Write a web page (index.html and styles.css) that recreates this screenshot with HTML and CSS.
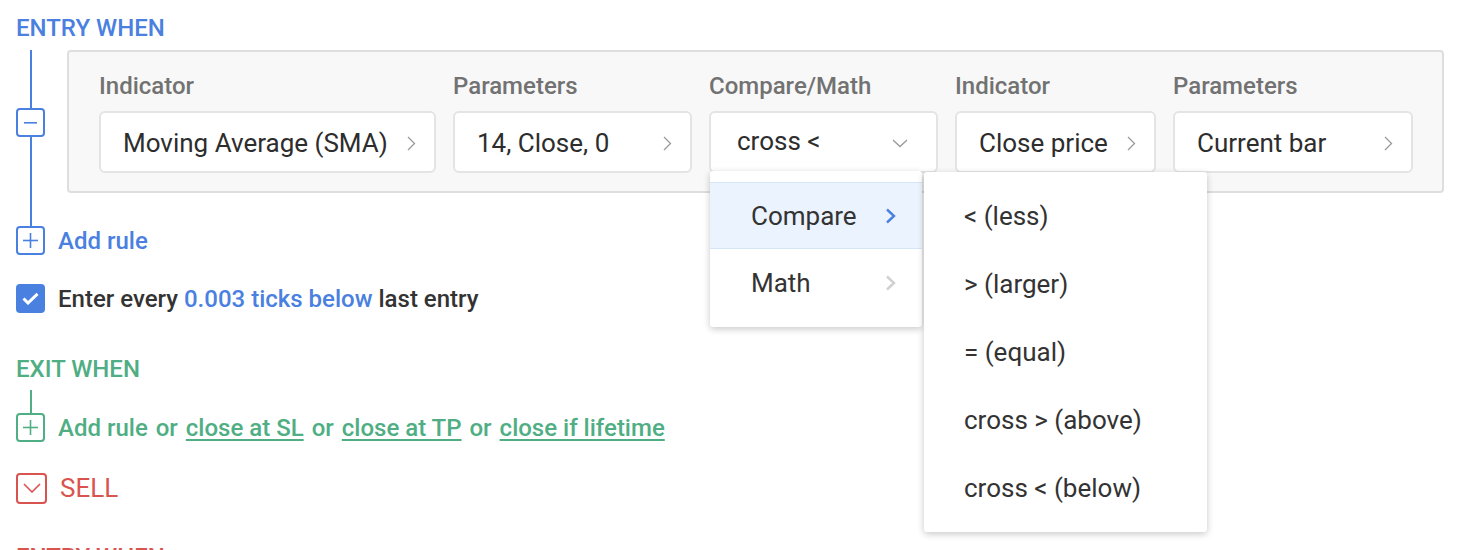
FILE: index.html
```html
<!DOCTYPE html>
<html>
<head>
<meta charset="utf-8">
<link rel="stylesheet" href="styles.css">
</head>
<body>
<div class="page">
  <div class="section-title blue">ENTRY WHEN</div>

  <div class="rule-row">
    <div class="gutter">
      <span class="vline vline-top blue-line"></span>
      <span class="tree-btn btn-blue">
        <svg width="13" height="2" viewBox="0 0 13 2"><rect x="0" y="0" width="13" height="1.6" fill="#4a80e0"/></svg>
      </span>
      <span class="vline vline-grow blue-line"></span>
    </div>
    <div class="panel">
      <div class="field f1">
        <div class="label">Indicator</div>
        <div class="box"><span>Moving Average (SMA)</span><svg class="chev" width="9" height="15" viewBox="0 0 9 15"><path d="M1 1 L7.5 7.5 L1 14" fill="none" stroke="#9a9a9a" stroke-width="1.3"/></svg></div>
      </div>
      <div class="field f2">
        <div class="label">Parameters</div>
        <div class="box"><span>14, Close, 0</span><svg class="chev" width="9" height="15" viewBox="0 0 9 15"><path d="M1 1 L7.5 7.5 L1 14" fill="none" stroke="#9a9a9a" stroke-width="1.3"/></svg></div>
      </div>
      <div class="field f3">
        <div class="label">Compare/Math</div>
        <div class="box box-select"><span>cross &lt;</span><svg class="chev-down" width="16" height="9" viewBox="0 0 16 9"><path d="M1 1 L8 7.5 L15 1" fill="none" stroke="#9a9a9a" stroke-width="1.3"/></svg></div>
        <div class="menus">
          <div class="menu menu-main">
            <div class="menu-item active"><span>Compare</span><svg width="12" height="16" viewBox="0 0 12 16"><path d="M2 1.5 L9 8 L2 14.5" fill="none" stroke="#4a80e0" stroke-width="2.4"/></svg></div>
            <div class="menu-item"><span>Math</span><svg width="12" height="16" viewBox="0 0 12 16"><path d="M2 1.5 L9 8 L2 14.5" fill="none" stroke="#d0d0d0" stroke-width="2.4"/></svg></div>
          </div>
          <div class="menu menu-sub">
            <div class="sub-item">&lt; (less)</div>
            <div class="sub-item">&gt; (larger)</div>
            <div class="sub-item">= (equal)</div>
            <div class="sub-item">cross &gt; (above)</div>
            <div class="sub-item">cross &lt; (below)</div>
          </div>
        </div>
      </div>
      <div class="field f4">
        <div class="label">Indicator</div>
        <div class="box"><span>Close price</span><svg class="chev" width="9" height="15" viewBox="0 0 9 15"><path d="M1 1 L7.5 7.5 L1 14" fill="none" stroke="#9a9a9a" stroke-width="1.3"/></svg></div>
      </div>
      <div class="field f5">
        <div class="label">Parameters</div>
        <div class="box"><span>Current bar</span><svg class="chev" width="9" height="15" viewBox="0 0 9 15"><path d="M1 1 L7.5 7.5 L1 14" fill="none" stroke="#9a9a9a" stroke-width="1.3"/></svg></div>
      </div>
    </div>
  </div>

  <div class="action-row">
    <span class="tree-btn btn-blue">
      <svg width="15" height="15" viewBox="0 0 15 15"><rect x="0" y="6.7" width="15" height="1.6" fill="#4a80e0"/><rect x="6.7" y="0" width="1.6" height="15" fill="#4a80e0"/></svg>
    </span>
    <span class="action-text blue">Add rule</span>
  </div>

  <div class="check-row">
    <span class="checkbox">
      <svg width="17" height="13" viewBox="0 0 17 13"><path d="M1.5 6.5 L6 11 L15.5 1.8" fill="none" stroke="#fff" stroke-width="3"/></svg>
    </span>
    <span class="check-text">Enter every <span class="blue">0.003 ticks below</span> last entry</span>
  </div>

  <div class="section-title green exit-title">EXIT WHEN</div>
  <div class="exit-stem"><span class="vline green-line stem"></span></div>
  <div class="action-row exit-row">
    <span class="tree-btn btn-green">
      <svg width="15" height="15" viewBox="0 0 15 15"><rect x="0" y="6.7" width="15" height="1.6" fill="#4fae83"/><rect x="6.7" y="0" width="1.6" height="15" fill="#4fae83"/></svg>
    </span>
    <span class="action-text green exit-links"><span>Add rule</span><span class="sep">or</span><a class="lnk">close at SL</a><span class="sep">or</span><a class="lnk">close at TP</a><span class="sep">or</span><a class="lnk">close if lifetime</a></span>
  </div>

  <div class="sell-row">
    <span class="tree-btn btn-red sell-btn">
      <svg width="18" height="10" viewBox="0 0 18 10"><path d="M1 1 L9 9 L17 1" fill="none" stroke="#d9534f" stroke-width="1.6"/></svg>
    </span>
    <span class="sell-text">SELL</span>
  </div>

  <div class="section-title red next-title">ENTRY WHEN</div>
</div>
</body>
</html>
```

FILE: styles.css
```css
* { box-sizing: border-box; }
html, body { margin: 0; padding: 0; background: #fff; }
body {
  font-family: Roboto, "Liberation Sans", Arial, sans-serif;
  color: #333;
  width: 1482px;
  height: 550px;
  overflow: hidden;
}
.page {
  padding: 14px 0 0 16px;
}
.blue { color: #4a80e0; }
.green { color: #4fae83; }
.red { color: #d9534f; }

.section-title {
  font-size: 24px;
  font-weight: 500;
  line-height: 28px;
  height: 28px;
  white-space: nowrap;
}

.rule-row {
  display: flex;
  margin-top: 8px;
}
.gutter {
  width: 51px;
  flex: 0 0 51px;
  display: flex;
  flex-direction: column;
  align-items: flex-start;
}
.vline {
  display: block;
  width: 2px;
  margin-left: 14px;
}
.blue-line { background: #4a80e0; }
.green-line { background: #4fae83; }
.vline-top { height: 58px; }
.vline-grow { flex: 1; }

.tree-btn {
  width: 29px;
  height: 29px;
  border: 2px solid #4a80e0;
  border-radius: 4px;
  background: #fff;
  display: flex;
  align-items: center;
  justify-content: center;
  flex: 0 0 auto;
}
.btn-green { border-color: #4fae83; }
.btn-red { border-color: #d9534f; }

.panel {
  width: 1377px;
  height: 143px;
  margin-bottom: 33px;
  background: #f8f8f8;
  border: 2px solid #dedede;
  border-radius: 4px;
  padding: 20px 0 0 30px;
  display: flex;
  gap: 17px;
}
.field {
  display: flex;
  flex-direction: column;
  position: relative;
}
.f1 { width: 337px; }
.f2 { width: 239px; }
.f3 { width: 229px; }
.f4 { width: 201px; }
.f5 { width: 240px; }
.label {
  font-size: 24px;
  line-height: 28px;
  color: #727272;
  font-weight: 500;
  white-space: nowrap;
}
.box {
  margin-top: 11px;
  height: 62px;
  background: #fff;
  border: 2px solid #e4e4e4;
  border-radius: 6px;
  display: flex;
  align-items: center;
  justify-content: space-between;
  padding: 2px 18px 0 22px;
  font-size: 26px;
  line-height: 30px;
  color: #2d2d2d;
  white-space: nowrap;
}
.box-select { padding-right: 28px; padding-left: 26px; }
.box-select span { margin-top: -4px; }
.chev { flex: 0 0 auto; }

.menus {
  position: absolute;
  left: 1px;
  top: 99px;
  display: flex;
  align-items: flex-start;
  gap: 2px;
  z-index: 5;
}
.menu {
  background: #fff;
  box-shadow: 0 2px 7px rgba(0,0,0,0.22);
  border-radius: 3px;
  font-size: 26px;
  line-height: 30px;
  color: #333;
}
.menu-main {
  width: 212px;
  padding: 11px 0;
}
.menu-item {
  height: 67px;
  display: flex;
  align-items: center;
  justify-content: space-between;
  padding: 0 25px 0 41px;
  border-top: 1px solid transparent;
  border-bottom: 1px solid transparent;
}
.menu-item.active {
  background: #ebf3fe;
  border-color: #d6e4f8;
}
.menu-sub {
  width: 283px;
  padding: 10px 0;
  margin-top: 1px;
}
.sub-item {
  height: 68px;
  display: flex;
  align-items: center;
  padding-left: 40px;
  white-space: nowrap;
}

.action-row {
  display: flex;
  align-items: center;
  gap: 13px;
  height: 29px;
}
.action-text {
  font-size: 24px;
  font-weight: 500;
  line-height: 28px;
  white-space: nowrap;
}
.exit-links {
  display: flex;
  gap: 8px;
}
.lnk {
  text-decoration: underline;
  text-underline-offset: 3px;
  text-decoration-thickness: 2px;
  color: inherit;
}

.check-row {
  display: flex;
  align-items: center;
  gap: 13px;
  height: 29px;
  margin-top: 29px;
}
.checkbox {
  width: 29px;
  height: 29px;
  background: #4a80e0;
  border-radius: 4px;
  display: flex;
  align-items: center;
  justify-content: center;
}
.check-text {
  font-size: 24px;
  font-weight: 500;
  line-height: 28px;
  color: #333;
  white-space: nowrap;
}

.exit-title { margin-top: 42px; }
.exit-stem {
  margin-top: 7px;
  height: 23px;
  display: flex;
}
.stem { height: 23px; }

.sell-row {
  display: flex;
  align-items: center;
  gap: 13px;
  height: 30px;
  margin-top: 31px;
}
.sell-btn { width: 31px; height: 31px; }
.sell-text {
  font-size: 26px;
  line-height: 30px;
  color: #d9534f;
}
.next-title { margin-top: 40px; }
```
